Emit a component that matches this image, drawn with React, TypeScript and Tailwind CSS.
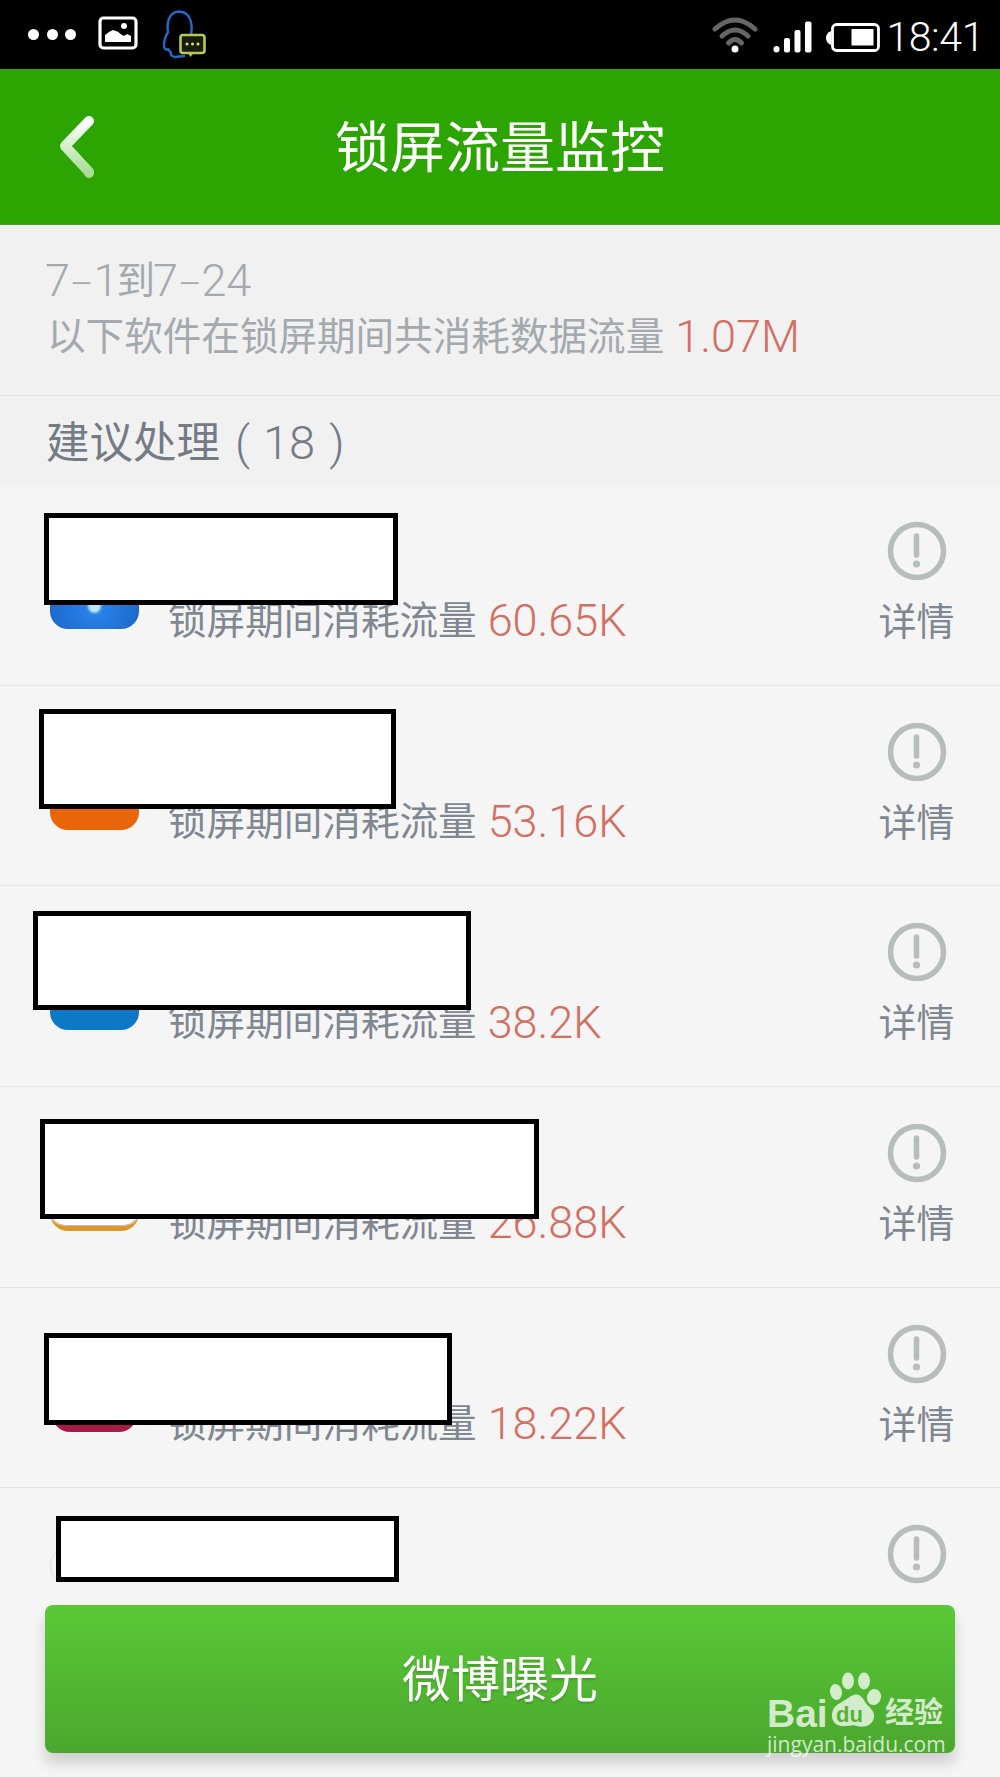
import React from "react";

const cjk = "font-['Liberation_Sans','Noto_Sans_CJK_SC',sans-serif]";
const num = "font-['Roboto',sans-serif] font-light";

type Row = {
  icon: React.ReactNode;
  value: string;
  redact: string;
};

function InfoIcon() {
  return (
    <svg width="60" height="60" viewBox="0 0 60 60" className="block">
      <circle cx="30" cy="30" r="26.500" fill="none" stroke="#b7bcbd" strokeWidth="5.500" />
      <path d="M29.500 15v19" stroke="#b7bcbd" strokeWidth="5.500" strokeLinecap="round" />
      <circle cx="29.500" cy="43" r="3.600" fill="#b7bcbd" />
    </svg>
  );
}

const rows: Row[] = [
  {
    icon: (
      <div className="w-[89px] h-[89px] rounded-[18px] bg-[radial-gradient(circle_at_50%_75%,#2a86ef,#1453ae)] relative">
        <div className="absolute left-[38px] bottom-[16px] w-[13px] h-[14px] rounded-full bg-[#bfe6fb] blur-[1px]" />
      </div>
    ),
    value: "60.65K",
    redact: "left-[44px] top-[28px] w-[354px] h-[92px]",
  },
  {
    icon: <div className="w-[89px] h-[89px] rounded-[18px] bg-[#e8650a]" />,
    value: "53.16K",
    redact: "left-[39px] top-[23px] w-[357px] h-[100px]",
  },
  {
    icon: <div className="w-[89px] h-[89px] rounded-[18px] bg-[#0c78c6]" />,
    value: "38.2K",
    redact: "left-[33px] top-[25px] w-[438px] h-[99px]",
  },
  {
    icon: (
      <div className="w-[89px] h-[89px] rounded-[18px] bg-white border-b-[5px] border-[#dc962a]">
        <div className="h-full rounded-[16px] border border-[#bdbdbd]" />
      </div>
    ),
    value: "26.88K",
    redact: "left-[40px] top-[32px] w-[499px] h-[100px]",
  },
  {
    icon: <div className="w-[85px] h-[89px] ml-[2px] rounded-[18px] bg-[#a81b49]" />,
    value: "18.22K",
    redact: "left-[44px] top-[45px] w-[408px] h-[92px]",
  },
  {
    icon: <div className="w-[20px] h-[36px] mt-[5px] rounded-l-full border-l border-[#dcdcdc]" />,
    value: "",
    redact: "left-[56px] top-[28px] w-[343px] h-[66px]",
  },
];

function AppRow({ row, last }: { row: Row; last: boolean }) {
  return (
    <div className={`relative flex h-[200.7px] shrink-0 ${last ? "" : "border-b border-[#e6e6e6]"}`}>
      <div className="ml-[50px] mt-[55px] w-[89px]">{row.icon}</div>
      {row.value && (
        <div className="ml-[29px] mt-[111px] flex items-center h-[50px] whitespace-nowrap">
          <span className="text-[38.600px] text-[#7f8791]">锁屏期间消耗流量</span>
          <span className={`ml-[11px] text-[45px] text-[#d26f62] ${num}`}>{row.value}</span>
        </div>
      )}
      <div className="ml-auto mr-[46px] w-[75px] mt-[36px] flex flex-col items-center">
        <InfoIcon />
        {row.value && <span className="mt-[16px] text-[38px] leading-[50px] text-[#7f8791] whitespace-nowrap">详情</span>}
      </div>
      <div className={`absolute border-[5px] border-black bg-white ${row.redact}`} />
    </div>
  );
}

function StatusBar() {
  return (
    <div className="flex items-center h-[69px] bg-black shrink-0">
      <div className="ml-[28px] flex gap-[7.500px]">
        <div className="w-[11px] h-[11px] rounded-full bg-white" />
        <div className="w-[11px] h-[11px] rounded-full bg-white" />
        <div className="w-[11px] h-[11px] rounded-full bg-white" />
      </div>
      <svg className="ml-[22px] mt-[-3px]" width="40" height="34" viewBox="0 0 40 34">
        <rect x="2" y="2" width="36" height="30" rx="3.500" fill="none" stroke="#fff" strokeWidth="3.200" />
        <path d="M7 26v-7q3-3 8-5 5 1 9 5 2 2 5-1l4 2v6z" fill="#fff" />
        <circle cx="26" cy="10" r="3" fill="#fff" />
      </svg>
      <svg className="ml-[25px]" width="44" height="50" viewBox="0 0 44 50">
        <path d="M27 30C30 18 30 2 16 1.500 4 2 4 16 5 22 3 26 0 30 1 37c1 3 3 3 4 2l3 4q-1 3 4 4l9-1" fill="none" stroke="#2369c9" strokeWidth="2.400" strokeLinejoin="round" strokeLinecap="round" />
        <rect x="17.500" y="25" width="24" height="18" rx="2.500" fill="#1b1b0a" stroke="#b3cc55" strokeWidth="2.600" />
        <path d="M25 43l2.500 4 3-4z" fill="#b3cc55" />
        <circle cx="24" cy="34" r="1.500" fill="#d5e38c" />
        <circle cx="29.500" cy="34" r="1.500" fill="#d5e38c" />
        <circle cx="35" cy="34" r="1.500" fill="#d5e38c" />
      </svg>
      <div className="ml-auto flex items-center">
        <svg width="46" height="36" viewBox="0 0 46 36">
          <path d="M3 12Q23-6 43 12" fill="none" stroke="#666" strokeWidth="5" strokeLinecap="round" />
          <path d="M10 19Q23 7 36 19" fill="none" stroke="#666" strokeWidth="5" strokeLinecap="round" />
          <path d="M16.500 26Q23 19 29.500 26" fill="none" stroke="#666" strokeWidth="5" strokeLinecap="round" />
          <circle cx="23" cy="32" r="3.500" fill="#fff" />
        </svg>
        <svg className="ml-[15px] mt-[4px]" width="39" height="32" viewBox="0 0 39 32">
          <rect x="0.500" y="25" width="6" height="6.500" rx="3" fill="#fff" />
          <rect x="11" y="17" width="6" height="14.500" rx="2" fill="#fff" />
          <rect x="21.500" y="9" width="6" height="22.500" rx="2" fill="#fff" />
          <rect x="32" y="0.500" width="6.500" height="31" rx="2" fill="#fff" />
        </svg>
        <svg className="ml-[14px] mt-[6px]" width="54" height="30" viewBox="0 0 54 30">
          <path d="M5 8q-5 2-5 7t5 7z" fill="#fff" />
          <rect x="6.500" y="1.500" width="46" height="26" rx="4" fill="none" stroke="#fff" strokeWidth="2.800" />
          <rect x="25.500" y="6" width="22" height="16.500" fill="#fff" />
        </svg>
        <span className="ml-[6px] mr-[16px] mt-[6px] text-[41px] leading-none text-white font-['Roboto',sans-serif] font-light tracking-[-0.4px]">18:41</span>
      </div>
    </div>
  );
}

function Header() {
  return (
    <div className="grid grid-cols-[1fr_auto_1fr] items-center h-[156px] bg-[#2ca502] shrink-0 border-b border-[#4a9a30]">
      <svg className="ml-[52px] blur-[0.6px]" width="50" height="70" viewBox="0 0 50 70">
        <defs>
          <linearGradient id="chev" x1="0" y1="0" x2="0" y2="1">
            <stop offset="0" stopColor="#ffffff" />
            <stop offset="1" stopColor="#a9dd95" />
          </linearGradient>
        </defs>
        <path d="M37 9 L13 34 L37 60 L37 61" fill="none" stroke="url(#chev)" strokeWidth="10" strokeLinecap="round" strokeLinejoin="round" />
      </svg>
      <div className="pt-[4px] text-[55px] leading-none text-white whitespace-nowrap">锁屏流量监控</div>
      <div />
    </div>
  );
}

function Watermark() {
  return (
    <div className="absolute left-[722px] top-[92px] w-[180px] h-[60px] text-white/75 whitespace-nowrap">
      <span className="absolute left-0 top-[1px] text-[39px] leading-[32px] font-bold">Bai</span>
      <span className="absolute left-[118px] top-[-2px] text-[29px] leading-[36px] font-bold">经验</span>
      <span className="absolute left-0 top-[36px] text-[21px] leading-[22px] font-['Open_Sans',sans-serif]">jingyan.baidu.com</span>
    </div>
  );
}

function Paw() {
  return (
    <svg className="absolute left-[782px] top-[63px]" width="62" height="64" viewBox="0 0 62 64">
      <g fill="#fff" fillOpacity="0.75">
        <ellipse cx="9" cy="24" rx="6" ry="8" transform="rotate(-10 9 24)" />
        <ellipse cx="21" cy="13" rx="6" ry="8.500" />
        <ellipse cx="37" cy="13" rx="6" ry="8.500" />
        <ellipse cx="47" cy="29" rx="7" ry="8" transform="rotate(15 47 29)" />
        <path d="M24 28c7-4 11 0 14 6 3 5 10 8 9 15-1 9-11 11-17 9-5-2-9 1-16 0-8-1-11-9-8-16 2-6 12-9 18-14z" />
      </g>
      <text x="9" y="54" fontSize="22" fontWeight="700" fill="#55b334" fontFamily="Liberation Sans">du</text>
    </svg>
  );
}

export default function App() {
  return (
    <div className={`relative flex flex-col w-[1000px] h-[1777px] overflow-hidden bg-[#f5f5f5] ${cjk}`}>
      <StatusBar />
      <Header />
      <div className="h-[171px] shrink-0 bg-[#f1f1f1] border-b border-[#e6e6e6] pl-[45px] pt-[33px] text-[#a4a9ad] whitespace-nowrap">
        <div className="flex items-center h-[46px] text-[38.600px]">
          <span className={`text-[45px] ${num}`}>7<span className="text-[36px]">–</span>1</span>
          <span className="mx-[-2px]">到</span>
          <span className={`text-[45px] ${num}`}>7<span className="text-[36px]">–</span>24</span>
        </div>
        <div className="flex items-center mt-[8px] h-[50px] pl-[2px]">
          <span className="text-[38.600px]">以下软件在锁屏期间共消耗数据流量</span>
          <span className={`ml-[11px] text-[45px] text-[#d26f62] ${num}`}>1.07M</span>
        </div>
      </div>
      <div className="flex items-center h-[89px] shrink-0 bg-[#f1f1f1] pl-[46px] pt-[6px] text-[43.500px] text-[#747b85] whitespace-nowrap">
        <span>建议处理</span>
        <span className={`ml-[15px] text-[47px] ${num}`}>(</span>
        <span className={`ml-[13px] text-[47px] ${num}`}>18</span>
        <span className={`ml-[14px] text-[47px] ${num}`}>)</span>
      </div>
      {rows.map((r, i) => (
        <AppRow key={i} row={r} last={i === rows.length - 1} />
      ))}
      <div className="absolute left-[45px] top-[1605px] w-[910px] h-[148px] rounded-[8px] bg-gradient-to-b from-[#59c936] to-[#4ba72e] shadow-[0_10px_14px_rgba(0,0,0,0.16)] flex items-center justify-center">
        <span className="pt-[2px] text-[49px] leading-none text-white [text-shadow:0_2px_2px_rgba(0,0,0,0.15)]">微博曝光</span>
        <Watermark />
        <Paw />
      </div>
    </div>
  );
}
